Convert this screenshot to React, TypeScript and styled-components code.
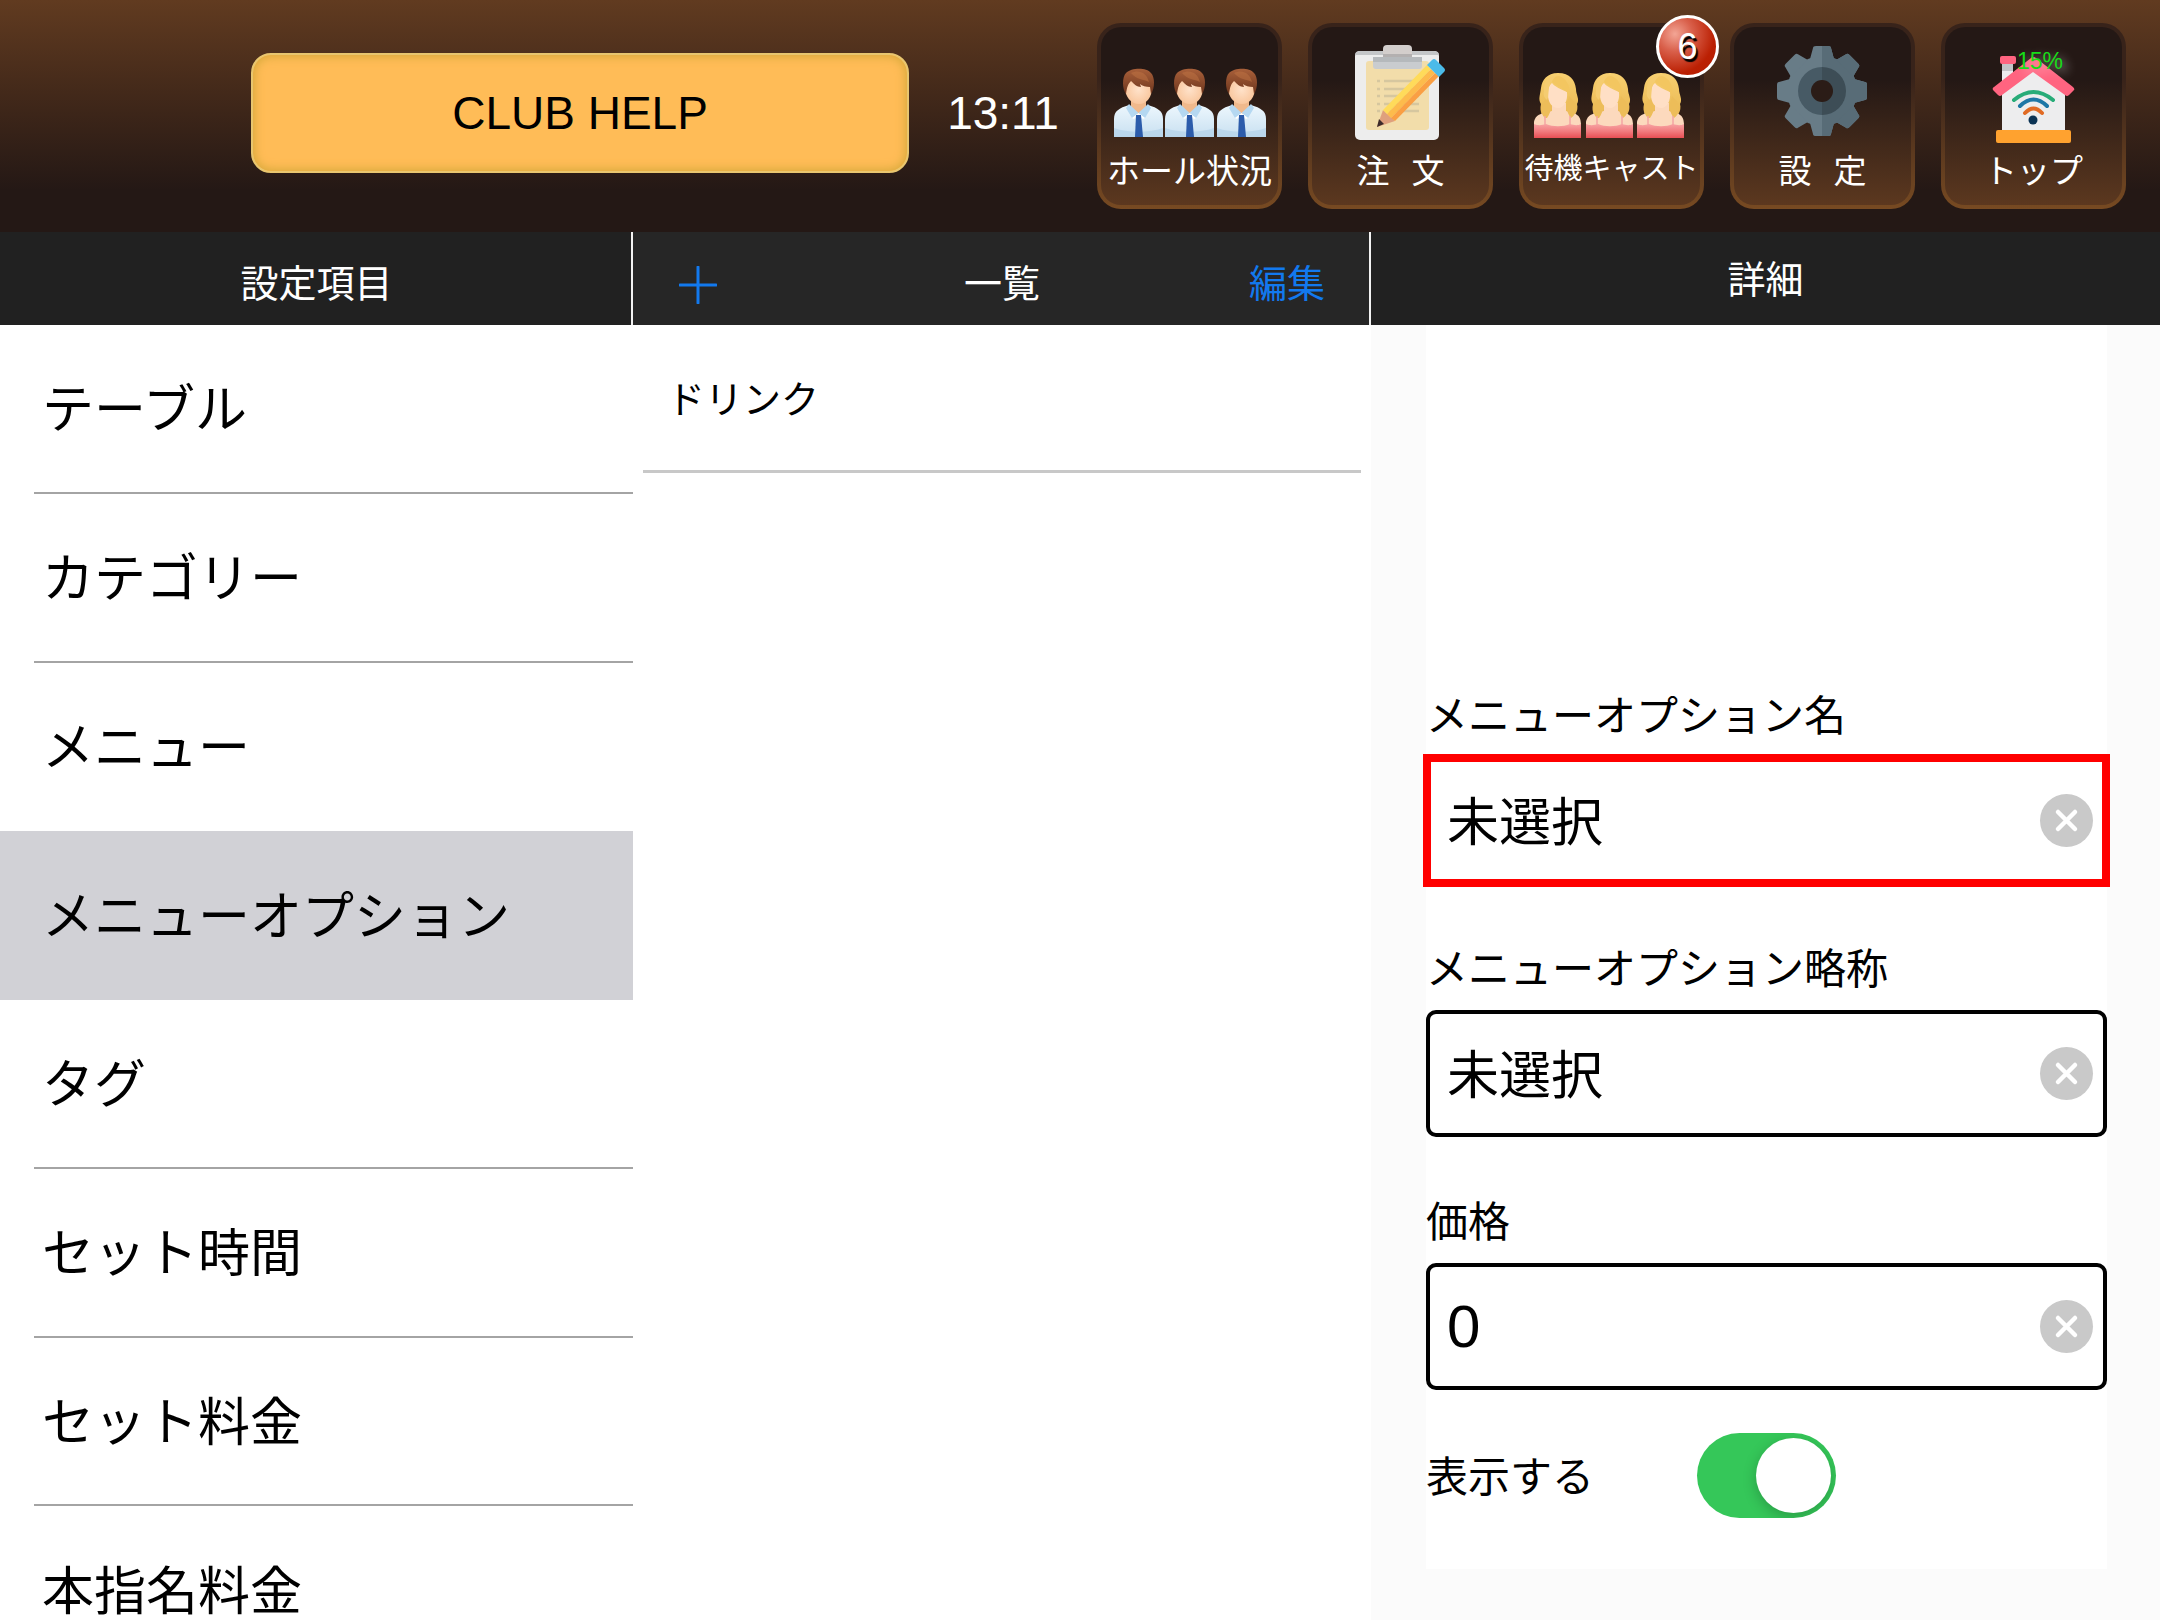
import React, { useState } from "react";
import styled, { createGlobalStyle, css } from "styled-components";

const jp = `"Noto Sans CJK JP", "Noto Sans", sans-serif`;
const latin = `"Liberation Sans", "Noto Sans CJK JP", sans-serif`;

const GlobalStyle = createGlobalStyle`
  *, *::before, *::after { box-sizing: border-box; }
  html, body { margin: 0; padding: 0; }
  body { background: #fff; color: #000; font-family: ${jp}; overflow: hidden; }
  button, input { font: inherit; color: inherit; }
  button { border: 0; padding: 0; background: none; cursor: pointer; }
  h2, ul { margin: 0; padding: 0; font-weight: 400; list-style: none; }
`;

const Screen = styled.div`
  display: flex;
  flex-direction: column;
  height: 100vh;
`;

const Header = styled.header`
  display: flex;
  align-items: flex-start;
  flex: none;
  height: 232px;
  padding: 23px 34px 0 251px;
  background: linear-gradient(#613b20 0%, #43291a 40%, #241815 82%, #241815 100%);
`;

const ClubButton = styled.button`
  flex: 1;
  height: 120px;
  margin-top: 30px;
  border: 2px solid #e8c66f;
  border-radius: 20px;
  background: #ffbc57;
  box-shadow: inset 0 0 10px 2px #d9aa3c;
  font-family: ${latin};
  font-size: 46px;
  line-height: 60px;
`;

const Clock = styled.time`
  flex: none;
  width: 188px;
  margin-top: 30px;
  color: #fff;
  font-family: ${latin};
  font-size: 46px;
  line-height: 120px;
  text-align: center;
`;

const Nav = styled.nav`
  display: flex;
  gap: 26px;
`;

const Tile = styled.button`
  position: relative;
  display: flex;
  flex-direction: column;
  align-items: center;
  width: 185px;
  height: 186px;
  border: 4px solid transparent;
  border-radius: 24px;
  background:
    linear-gradient(#241815 0%, #241815 30%, #5c381f 100%) padding-box,
    linear-gradient(#38231a 0%, #38231a 30%, #774a22 100%) border-box;
  color: #fff;
`;

const TileArt = styled.svg`
  display: block;
  flex: none;
  width: 177px;
  height: 120px;
`;

const TileLabel = styled.span<{ $compact?: boolean }>`
  font-size: ${(p) => (p.$compact ? 29 : 33)}px;
  line-height: ${(p) => (p.$compact ? 38 : 44)}px;
  white-space: pre;
`;

const Badge = styled.span`
  position: absolute;
  top: -12px;
  right: -19px;
  width: 63px;
  height: 63px;
  border: 3px solid #fff;
  border-radius: 50%;
  background: radial-gradient(circle at 28% 28%, #f3a595 0%, #d9604b 30%, #bb2003 68%, #b31b00 100%);
  font-family: ${latin};
  font-size: 36px;
  line-height: 57px;
  text-align: center;
  text-shadow: 2px 3px 1px #000;
`;

const Battery = styled.span`
  position: absolute;
  top: 20px;
  left: 72px;
  color: #18dd18;
  font-family: ${latin};
  font-size: 23px;
  line-height: 28px;
  text-shadow: 5px 4px 10px rgba(255, 255, 255, 0.5);
`;

const Columns = styled.main`
  display: grid;
  grid-template-columns: 633fr 738fr 789fr;
  flex: 1;
  min-height: 0;
`;

const Column = styled.section<{ $tint?: boolean }>`
  display: flex;
  flex-direction: column;
  min-width: 0;
  min-height: 0;
  overflow: hidden;
  background: ${(p) => (p.$tint ? "#fbfbfb" : "#fff")};
`;

const Bar = styled.div<{ $divider?: boolean; $low?: boolean; $tone?: string }>`
  display: grid;
  grid-template-columns: 1fr auto 1fr;
  align-items: center;
  flex: none;
  height: 93px;
  padding: ${(p) => (p.$low ? "4px 44px 0 46px" : "0 42px 4px")};
  border-right: ${(p) => (p.$divider ? "2px solid #f2f2f2" : "0")};
  background: ${(p) => p.$tone ?? "#212121"};
  color: #fff;
  font-size: 38px;
  line-height: 56px;
`;

const BarTitle = styled.h2`
  grid-column: 2;
  font-size: 38px;
`;

const BarAction = styled.button<{ $end?: boolean; $icon?: boolean }>`
  display: flex;
  grid-column: ${(p) => (p.$end ? 3 : 1)};
  grid-row: 1;
  justify-self: ${(p) => (p.$end ? "end" : "start")};
  padding-top: ${(p) => (p.$icon ? 8 : 0)}px;
  color: #1279ee;
`;

const SettingList = styled.ul`
  display: grid;
  grid-template-rows: repeat(8, 1fr);
  flex: none;
  height: 1350px;
`;

const SettingItem = styled.li<{ $selected: boolean; $line: boolean }>`
  display: flex;
  padding-left: 34px;
  background: ${(p) => (p.$selected ? "#d1d1d6" : "transparent")};

  button {
    flex: 1;
    padding: 0 0 4px 8px;
    border-bottom: 2px solid ${(p) => (p.$line ? "#a4a4a4" : "transparent")};
    font-size: 52px;
    line-height: 60px;
    text-align: left;
  }
`;

const OptionItem = styled.li`
  margin: 0 10px;
  border-bottom: 3px solid #c8c8c8;

  button {
    display: block;
    width: 100%;
    padding: 44px 24px 45px;
    font-size: 38px;
    line-height: 56px;
    text-align: left;
  }
`;

const Panel = styled.form`
  display: flex;
  flex-direction: column;
  margin: 0 53px 0 55px;
  padding: 360px 0 51px;
  background: #fff;
`;

const FieldGroup = styled.div`
  display: flex;
  flex-direction: column;
  gap: 12px;
  margin-bottom: 54px;

  &:last-of-type { margin-bottom: 43px; }
`;

const FieldLabel = styled.label`
  padding-bottom: 4px;
  font-size: 42px;
  line-height: 56px;
`;

const highlighted = css`
  border-radius: 0;
  outline: 8px solid #f00;
  outline-offset: -5px;
`;

const FieldBox = styled.div<{ $highlight?: boolean }>`
  display: flex;
  align-items: center;
  height: 127px;
  padding: 0 10px 0 17px;
  border: 4px solid #000;
  border-radius: 10px;
  background: #fff;
  ${(p) => p.$highlight && highlighted}
`;

const TextInput = styled.input<{ $numeric?: boolean }>`
  flex: 1;
  min-width: 0;
  height: 90px;
  padding: ${(p) => (p.$numeric ? 0 : "0 0 4px")};
  border: 0;
  outline: 0;
  background: transparent;
  font-family: ${(p) => (p.$numeric ? latin : jp)};
  font-size: ${(p) => (p.$numeric ? 60 : 52)}px;
`;

const ClearButton = styled.button`
  flex: none;
  width: 53px;
  height: 53px;
  border-radius: 50%;
  background: #c9c9c9;

  svg { display: block; }
`;

const SwitchRow = styled.section`
  display: flex;
  align-items: center;
  gap: 103px;
`;

const Switch = styled.input`
  flex: none;
  width: 139px;
  height: 85px;
  margin: 0;
  padding: 5px;
  overflow: hidden;
  appearance: none;
  border-radius: 43px;
  background: #d8d8dc;
  cursor: pointer;

  &::before {
    content: "";
    display: block;
    width: 75px;
    height: 75px;
    border-radius: 50%;
    background: #fff;
    box-shadow: 0 4px 14px rgba(0, 0, 0, 0.22);
  }

  &:checked { background: #35c759; }
  &:checked::before { margin-left: auto; }
`;

const Man = ({ x }: { x: number }) => (
  <g transform={`translate(${x} 42)`}>
    <path d="M17 30h15v10l-7 7-8-7z" fill="#f0b98c" />
    <path d="M0 68V50c0-8 5-11 15-14l9.500 11L34 36c10 3 15 6 15 14v18z" fill="url(#shirt)" />
    <path d="M0 59c14 5 35 5 49 0v9H0z" fill="#b4d3ea" opacity=".7" />
    <path d="M15 35l-3 4 6 10 6.500-5zM34 35l3 4-6 10-6.500-5z" fill="#b5d8f1" />
    <path d="M18 49l6.500-5 6.500 5-2 1-4.500-4-4.500 4z" fill="#fff" />
    <path d="M22 46h5l2 22h-8z" fill="#2c5cab" />
    <path d="M11 18c0 10 6 17 14 17s13-7 13-17c0-8-5-12-13-12s-14 4-14 12z" fill="url(#skin)" />
    <path d="M12 25C8 20 8 8 12 4 17-1 32-2 37 4c4 4 4 15 0 21l-1-7c-4 0-8-1-10-3l1 3c-4 0-7-3-10-6-3 3-4 6-5 13z" fill="url(#brown)" />
    <path d="M17 4c8-4 16 0 18 9-6-3-12-2-18-9z" fill="#c07443" opacity=".5" />
  </g>
);

const HallArt = () => (
  <TileArt viewBox="0 0 177 120" aria-hidden="true">
    <defs>
      <linearGradient id="shirt" x2="0" y2="1"><stop stopColor="#edf7fd" /><stop offset="1" stopColor="#c8e0f1" /></linearGradient>
      <radialGradient id="skin"><stop stopColor="#ffe2ca" /><stop offset="1" stopColor="#f9c79e" /></radialGradient>
      <linearGradient id="brown" x2="0" y2="1"><stop stopColor="#a9603a" /><stop offset="1" stopColor="#6d351d" /></linearGradient>
    </defs>
    <Man x={13} />
    <Man x={64} />
    <Man x={116} />
  </TileArt>
);

const OrderArt = () => (
  <TileArt viewBox="0 0 177 120" aria-hidden="true">
    <rect x="43" y="24" width="84" height="89" rx="5" fill="#ededed" />
    <path d="M43 28q0-4 5-4h74q5 0 5 4z" fill="#c4c6c8" />
    <rect x="54" y="34" width="63" height="69" rx="3" fill="#f2ddaa" />
    <path d="M61 30h49v9q0 3-3 3H64q-3 0-3-3z" fill="#c9cccf" />
    <path d="M61 30h49v5H61z" fill="#b5b9bc" />
    <path d="M71 30V22q0-4 4-4h21q4 0 4 4v8z" fill="#d3cecc" />
    <path d="M71 27h29v3H71z" fill="#b3b0b0" />
    <path d="M65 54h3M72 54h30M65 62h3M72 62h30M65 69h3M72 69h35M65 77h3M72 77h35M65 84h3M72 84h35" stroke="#d6c79f" strokeWidth="2.500" />
    <path d="M71 83l12 11-18 6z" fill="#dfa07d" />
    <path d="M67 92l5 5-7 3z" fill="#3c2b2b" />
    <path d="M71 83L115 38l4 4L75 87z" fill="#ffdb5a" />
    <path d="M75 87L119 42l4 4L79 91z" fill="#fdbb4c" />
    <path d="M79 91L123 46l4 3L83 94z" fill="#fa9f43" />
    <path d="M115 38l5-5q2-2 4 0l8 8q2 2 0 4l-5 5z" fill="#4bbbe9" />
  </TileArt>
);

const Woman = ({ x }: { x: number }) => (
  <g transform={`translate(${x} 46)`}>
    <path d="M24 0C13 0 8 7 7 15c-1 8-3 11 0 16-2 8 2 14 7 15h21c5-1 10-8 8-15 3-5-1-9-1-15C41 7 36 0 24 0z" fill="url(#blond)" />
    <path d="M18 30h14v8c5 2 15 1 15 13v3H0v-3c0-11 11-11 18-13z" fill="#fcd9bd" />
    <path d="M11 45c-5-5-4-10-2-15l6-7 3 12c-2 3-2 6-5 10zM37 45c6-4 5-10 4-15l-6-7-3 13c2 2 2 6 5 9z" fill="#edbd59" />
    <path d="M14 22c0-5 1-10 4-12 3 4 9 6 15 9 1 9-3 16-9 16s-10-6-10-13z" fill="#ffdfc5" />
    <path d="M10 18C9 6 18 2 24 3c-5 3-7 6-9 11-1 6 0 9-2 13-3-3-4-5-3-9z" fill="#f5cc70" />
    <path d="M18 9c5 4 13 6 17 13 2-9-3-17-10-19-4 0-6 3-7 6z" fill="#f3c660" />
    <path d="M11 43v9M36 43v9" stroke="#f4a5a4" strokeWidth="1.500" />
    <path d="M0 51c5 2 8 1 12 0 7 3 17 3 24 0 4 1 7 2 11 0v14H0z" fill="url(#dress)" />
  </g>
);

const CastArt = () => (
  <TileArt viewBox="0 0 177 120" aria-hidden="true">
    <defs>
      <linearGradient id="blond" x2="0" y2="1"><stop stopColor="#f8d070" /><stop offset="1" stopColor="#e8b650" /></linearGradient>
      <linearGradient id="dress" x2="0" y2="1"><stop stopColor="#f7a3a3" /><stop offset=".5" stopColor="#f27d80" /><stop offset="1" stopColor="#e84f54" /></linearGradient>
    </defs>
    <Woman x={11} />
    <Woman x={63} />
    <Woman x={114} />
  </TileArt>
);

const GearBody = ({ body, ring }: { body: string; ring: string }) => (
  <>
    <g fill={body}>
      <circle r="35" />
      {[0, 45, 90, 135, 180, 225, 270, 315].map((a) => (
        <path key={a} transform={`rotate(${a})`} d="M-12-32l3-11q0-2 3-2H6q3 0 3 2l3 11z" />
      ))}
    </g>
    <circle r="24" fill={ring} />
  </>
);

const GearArt = () => (
  <TileArt viewBox="0 0 177 120" aria-hidden="true">
    <defs>
      <clipPath id="rightHalf"><rect y="-50" width="50" height="100" /></clipPath>
    </defs>
    <g transform="translate(88 64)">
      <GearBody body="#687c87" ring="#475a65" />
      <g clipPath="url(#rightHalf)"><GearBody body="#586c77" ring="#3d4d56" /></g>
      <circle r="11" fill="#2b1c17" />
    </g>
  </TileArt>
);

const HomeArt = () => (
  <TileArt viewBox="0 0 177 120" aria-hidden="true">
    <path d="M57 36h11v22H57z" fill="#ececee" />
    <path d="M57 36h11v8H57z" fill="#c3c4c8" />
    <rect x="55" y="29" width="16" height="8" rx="2" fill="#ff6480" />
    <path d="M57 104V64l31-26 32 26v40z" fill="#ededee" />
    <path d="M86 31q2-2 5 0l37 29q2 2 1 3l-5 5q-2 2-4 0L88 45 57 68q-2 2-4 0l-5-5q-1-2 1-3z" fill="#ff6480" />
    <rect x="51" y="103" width="75" height="13" rx="2" fill="#ffa22f" />
    <g fill="none" strokeWidth="4" strokeLinecap="round">
      <path d="M69 73q19.500-16 39 0" stroke="#28ac78" />
      <path d="M75 79q13.500-13 27 0" stroke="#1e77a6" />
      <path d="M80 86q8.500-9 17 0" stroke="#e16b24" />
    </g>
    <circle cx="88" cy="93" r="4.500" fill="#0b3354" />
  </TileArt>
);

const settings = [
  "テーブル",
  "カテゴリー",
  "メニュー",
  "メニューオプション",
  "タグ",
  "セット時間",
  "セット料金",
  "本指名料金",
];

interface FieldProps {
  id: string;
  label: string;
  initial: string;
  numeric?: boolean;
  highlight?: boolean;
}

const Field = ({ id, label, initial, numeric, highlight }: FieldProps) => {
  const [value, setValue] = useState(initial);
  return (
    <FieldGroup>
      <FieldLabel htmlFor={id}>{label}</FieldLabel>
      <FieldBox $highlight={highlight}>
        <TextInput
          id={id}
          type="text"
          inputMode={numeric ? "numeric" : undefined}
          $numeric={numeric}
          value={value}
          onChange={(e) => setValue(e.target.value)}
        />
        <ClearButton type="button" aria-label="クリア" onClick={() => setValue("")}>
          <svg width="53" height="53" viewBox="0 0 53 53" aria-hidden="true">
            <path d="M18 18l17 17M35 18l-17 17" stroke="#fff" strokeWidth="4.500" strokeLinecap="round" />
          </svg>
        </ClearButton>
      </FieldBox>
    </FieldGroup>
  );
};

export default function App() {
  const [selected, setSelected] = useState(3);
  const [visible, setVisible] = useState(true);

  return (
    <Screen>
      <GlobalStyle />
      <Header>
        <ClubButton type="button">CLUB HELP</ClubButton>
        <Clock>13:11</Clock>
        <Nav>
          <Tile type="button">
            <HallArt />
            <TileLabel>ホール状況</TileLabel>
          </Tile>
          <Tile type="button">
            <OrderArt />
            <TileLabel>{"注   文"}</TileLabel>
          </Tile>
          <Tile type="button">
            <CastArt />
            <TileLabel $compact>待機キャスト</TileLabel>
            <Badge>6</Badge>
          </Tile>
          <Tile type="button">
            <GearArt />
            <TileLabel>{"設   定"}</TileLabel>
          </Tile>
          <Tile type="button">
            <HomeArt />
            <TileLabel>トップ</TileLabel>
            <Battery>15%</Battery>
          </Tile>
        </Nav>
      </Header>

      <Columns>
        <Column>
          <Bar $divider $low>
            <BarTitle>設定項目</BarTitle>
          </Bar>
          <SettingList>
            {settings.map((name, i) => (
              <SettingItem key={name} $selected={i === selected} $line={i !== selected && i + 1 !== selected}>
                <button type="button" onClick={() => setSelected(i)}>{name}</button>
              </SettingItem>
            ))}
          </SettingList>
        </Column>

        <Column>
          <Bar $divider $low $tone="#262626">
            <BarAction type="button" aria-label="追加" $icon>
              <svg width="38" height="38" viewBox="0 0 38 38" aria-hidden="true">
                <path d="M19 1v36M1 19h36" stroke="currentColor" strokeWidth="3" strokeLinecap="round" />
              </svg>
            </BarAction>
            <BarTitle>一覧</BarTitle>
            <BarAction type="button" $end>編集</BarAction>
          </Bar>
          <ul>
            <OptionItem>
              <button type="button">ドリンク</button>
            </OptionItem>
          </ul>
        </Column>

        <Column $tint>
          <Bar>
            <BarTitle>詳細</BarTitle>
          </Bar>
          <Panel onSubmit={(e) => e.preventDefault()}>
            <Field id="option-name" label="メニューオプション名" initial="未選択" highlight />
            <Field id="option-short" label="メニューオプション略称" initial="未選択" />
            <Field id="option-price" label="価格" initial="0" numeric />
            <SwitchRow>
              <FieldLabel htmlFor="option-visible">表示する</FieldLabel>
              <Switch
                id="option-visible"
                type="checkbox"
                role="switch"
                checked={visible}
                onChange={(e) => setVisible(e.target.checked)}
              />
            </SwitchRow>
          </Panel>
        </Column>
      </Columns>
    </Screen>
  );
}
